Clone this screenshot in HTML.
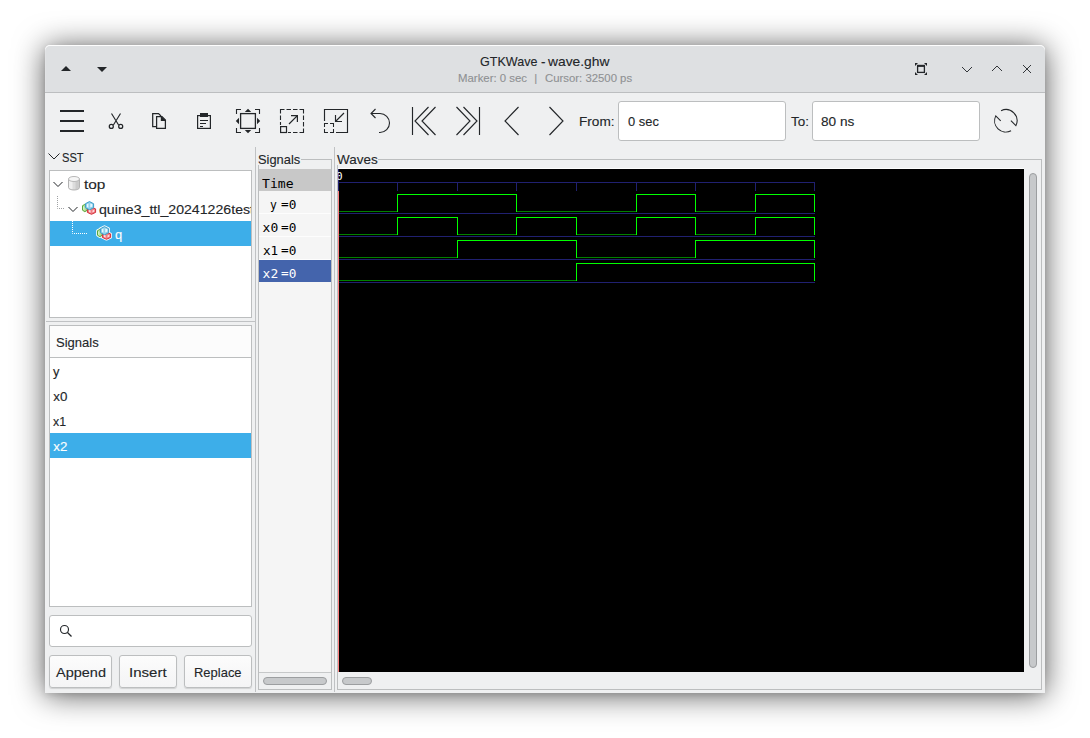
<!DOCTYPE html>
<html lang="en">
<head>
<meta charset="utf-8">
<title>GTKWave - wave.ghw</title>
<style>
*{box-sizing:border-box;margin:0;padding:0}
html,body{width:1090px;height:738px;background:#fff;overflow:hidden}
body{position:relative;font-family:"Liberation Sans",sans-serif;font-size:13.33px;color:#232629;line-height:16px}
body div,body svg{position:absolute}
svg{overflow:visible}
.t{white-space:pre;transform-origin:0 0;-webkit-text-stroke:.12px}
.m{font-family:"DejaVu Sans Mono","Liberation Mono",monospace;font-size:13px;-webkit-text-stroke:0}
.p{position:absolute;top:0;transform-origin:0 0}
.clip{overflow:hidden}
.win{left:45px;top:45px;width:1000px;height:648px;background:#eff0f1;border-radius:5px 5px 0 0;box-shadow:0 2px 6px rgba(0,0,0,.1),0 2px 31px rgba(0,0,0,.66)}
.titlebar{left:45px;top:45px;width:1000px;height:47px;background:#dee0e2;border-radius:5px 5px 0 0;box-shadow:inset 0 1px 0 #fdfdfd,inset 1px 0 0 rgba(255,255,255,.12)}
.entry{background:#fff;border:1px solid #bcbebf;border-radius:3px}
.box{background:#fff;border:1px solid #bcbebf}
.btn{border:1px solid #bcbebf;border-radius:3px;background:linear-gradient(#fcfcfc,#f4f4f5);box-shadow:0 1px 1px rgba(0,0,0,.13)}
.sel{background:#3daee9}
.frame{border:1px solid #bcbebf}
.sb{border:1px solid #9c9ea0;border-radius:4.500px;background:#c7c9cb}
</style>
</head>
<body>
<div class="win"></div>
<div class="titlebar"></div><div style="left:45px;top:92px;width:1000px;height:1px;background:#bcbec0"></div><div class="t" style="left:0;top:54px;width:1090px;height:16px;color:#232629;"><span class="p" style="left:479.50px;transform:scaleX(0.9410)">GTKWave</span> <span class="p" style="left:541.10px;transform:scaleX(1.0000)">-</span> <span class="p" style="left:548.30px;transform:scaleX(1.0367)">wave.ghw</span></div><div class="t" style="left:0;top:70px;width:1090px;height:16px;color:#8f9193;font-size:11.5px;"><span class="p" style="left:457.71px;transform:scaleX(0.9913)">Marker: 0 sec</span>  <span class="p" style="left:534.20px;transform:scaleX(1.0000)">|</span>  <span class="p" style="left:545.40px;transform:scaleX(0.9875)">Cursor: 32500 ps</span></div><svg style="left:0;top:0" width="1090" height="100" viewBox="0 0 1090 100">
  <path d="M61 71 L66 66 L71 71 Z" fill="#232629"/>
  <path d="M97 67 L107 67 L102 72 Z" fill="#232629"/>
  <g fill="none" stroke="#232629" stroke-width="1.3">
    <rect x="917.6" y="66.2" width="6.8" height="6.2"/>
    <path d="M917 65.6 H925" stroke-width="1.6"/>
  </g>
  <path d="M915 63 h3 l-3 3z M927 63 v3 l-3 -3z M915 75 v-3 l3 3z M927 75 h-3 l3 -3z" fill="#232629"/>
  <g fill="none" stroke="#33363a" stroke-width="1">
    <path d="M962 67 L967 72 L972 67"/>
    <path d="M992 71 L997 66 L1002 71"/>
    <path d="M1023 65 L1031 73 M1031 65 L1023 73"/>
  </g>
</svg>
<svg style="left:0;top:0" width="1090" height="150" viewBox="0 0 1090 150">
  <g fill="#232629">
    <rect x="60" y="110" width="24" height="2"/>
    <rect x="60" y="120" width="24" height="2"/>
    <rect x="60" y="130" width="24" height="2"/>
  </g>
  <g fill="none" stroke="#232629" stroke-width="1.25">
    <path d="M111.500 113.500 L118.600 125 M120.500 113.500 L113.400 125" stroke-width="1.150"/>
    <circle cx="111.300" cy="126.400" r="2"/>
    <circle cx="120.700" cy="126.400" r="2"/>
  </g>
  <g fill="none" stroke="#232629" stroke-width="1.25">
    <path d="M156.500 126.500 H152.700 V113.600 H158.500 L161 116"/>
    <path d="M156.600 116.600 H162 L165.400 120 V128.400 H156.600 Z"/>
    <path d="M160.800 115.600 L166.200 121 H160.800 Z" fill="#232629" stroke="none"/>
  </g>
  <g fill="none" stroke="#232629" stroke-width="1.2">
    <rect x="197.600" y="115.600" width="12.800" height="12.800"/>
    <rect x="200" y="113" width="8" height="4" fill="#232629" stroke="none"/>
    <path d="M200 120.500 H208 M200 123.500 H206 M200 126.500 H203" stroke-width="1"/>
  </g>
  <g fill="none" stroke="#232629" stroke-width="1.1">
    <rect x="240.600" y="113.600" width="14.800" height="14.800" stroke-width="1.3"/>
    <path d="M236.500 114 V109.500 H241 M255 109.500 H259.500 V114 M259.500 128 V132.500 H255 M241 132.500 H236.500 V128"/>
    <path d="M244.800 112 L248 108.800 L251.200 112 Z M244.800 130 L248 133.200 L251.200 130 Z M239 117.800 L235.800 121 L239 124.200 Z M257 117.800 L260.200 121 L257 124.200 Z" fill="#232629" stroke="none"/>
  </g>
  <g fill="none" stroke="#232629" stroke-width="1.1">
    <path d="M280 109.500 H304 M303.500 109 V133" stroke-dasharray="4.500 2"/>
    <path d="M280.500 109 V125" stroke-dasharray="4.500 2"/>
    <path d="M304 132.500 H288" stroke-dasharray="4.500 2"/>
    <rect x="280.600" y="126.600" width="5.900" height="5.900" stroke-width="1.200"/>
    <path d="M289 124 L297.400 115.600 M291 115.600 H297.400 V122" stroke-width="1.200"/>
  </g>
  <g fill="none" stroke="#232629" stroke-width="1.15">
    <path d="M324.500 121 V109.500 H347.500 V132.500 H336"/>
    <path d="M324.500 127 V123.500 H328 M330 123.500 H333.500 V127 M333.500 129 V132.500 H330 M328 132.500 H324.500 V129" stroke-width="1.050"/>
    <path d="M344 113 L335.500 121.500 M335.500 115 V121.500 H342"/>
  </g>
  <path d="M375.500 109 L371 113.500 L375.500 118 M371 113.500 H380 A9.500 9.500 0 0 1 380 132.500 H379" fill="none" stroke="#232629" stroke-width="1.1"/>
  <g fill="none" stroke="#232629" stroke-width="1.15">
    <path d="M412.500 107 V135 M428.500 107 L415 121 L428.500 135 M435.500 107 L422 121 L435.500 135"/>
    <path d="M479.500 107 V135 M463.500 107 L477 121 L463.500 135 M456.500 107 L470 121 L456.500 135"/>
    <path d="M518.500 107 L505 121 L518.500 135"/>
    <path d="M549.500 107 L563 121 L549.500 135"/>
  </g>
  <g fill="none" stroke="#232629" stroke-width="1.05">
    <path d="M1001.070 110.650 A11.200 11.200 0 0 1 1015.870 125.710 L1010.900 120.700"/>
    <path d="M1011.060 130.690 A11.200 11.200 0 0 1 995.730 115.890 L1000.700 120.900"/>
  </g>
</svg><div class="t" style="left:578.98px;top:114px;color:#232629;transform:scaleX(1.0212);">From:</div><div class="entry" style="left:618px;top:101px;width:168px;height:40px;"></div><div class="t" style="left:627.50px;top:114px;color:#232629;transform:scaleX(0.9688);">0 sec</div><div class="t" style="left:791.20px;top:114px;color:#232629;transform:scaleX(1.0059);">To:</div><div class="entry" style="left:812px;top:101px;width:168px;height:40px;"></div><div class="t" style="left:821.30px;top:114px;color:#232629;transform:scaleX(1.0212);">80 ns</div>
<div style="left:255px;top:147px;width:1px;height:545px;background:#c0c2c4"></div><div class="box" style="left:49px;top:170px;width:203px;height:148px;"></div><div class="sel" style="left:50px;top:221px;width:201px;height:25px;"></div><div style="left:46px;top:321px;width:209px;height:1px;background:#c0c2c4"></div><div class="box" style="left:49px;top:325px;width:203px;height:282px;"></div><div style="left:50px;top:326px;width:201px;height:31px;background:#fcfcfc"></div><div style="left:50px;top:357px;width:201px;height:1px;background:#bcbebf"></div><div class="sel" style="left:50px;top:433px;width:201px;height:25px;"></div><div class="entry" style="left:49px;top:615px;width:203px;height:32px;"></div><div class="btn" style="left:49px;top:655px;width:63px;height:33px;"></div><div class="btn" style="left:119px;top:655px;width:58px;height:33px;"></div><div class="btn" style="left:184px;top:655px;width:68px;height:33px;"></div><svg style="left:0;top:0" width="300" height="738" viewBox="0 0 300 738">
  <g fill="none" stroke="#232629" stroke-width="1">
    <path d="M48.500 153.500 L54 159 L59.500 153.500"/>
    <path d="M53.500 182 L58 186.500 L62.500 182"/>
    <path d="M68.500 207 L73 211.500 L77.500 207"/>
  </g>
  <path d="M57.500 196 V208.500 H64" fill="none" stroke="#a0a2a4" stroke-width="1" stroke-dasharray="1 1"/>
  <path d="M72.500 221 V233.500 H87" fill="none" stroke="#fff" stroke-width="1" stroke-dasharray="1 1"/>
  <path d="M68.500 179 V187.500 A5.500 2.500 0 0 0 79.500 187.500 V179 Z" fill="#dcdcdc"/>
  <path d="M69 179 V188 Q70.500 189.300 72.500 189.700 V180 Z" fill="#f0f0f0"/>
  <path d="M79 179 V188 Q77.500 189.300 75.500 189.700 V180 Z" fill="#cbcbcb"/>
  <path d="M68.500 179 V187.500 A5.500 2.500 0 0 0 79.500 187.500 V179" fill="none" stroke="#b2b2b2" stroke-width="1"/>
  <ellipse cx="74" cy="179" rx="5.500" ry="2.500" fill="#f6f6f6" stroke="#b8b8b8" stroke-width="1"/>
  <g transform="translate(82 201)"><path d="M2.800 3.400 L5.300 4.700 V9.200 L2.800 10.700 L.5 9.200 V4.700 Z" fill="#aee094" stroke="#58a73a" stroke-width="1" stroke-linejoin="round"/>
<path d="M9.500 6.200 L13.600 7.900 V11.400 L9.500 13.300 L5.400 11.400 V7.900 Z" fill="#f17c82" stroke="#d2313b" stroke-width="1" stroke-linejoin="round"/>
<path d="M7.500 .6 L11.600 2.700 V6.700 L7.500 8.900 L3.400 6.700 V2.700 Z" fill="#8ed1ed" stroke="#3d9cc7" stroke-width="1" stroke-linejoin="round"/>
<path d="M5 3.200 L6.400 2.600 V6.800 L5 6 Z M8.300 2.400 L10.300 3.300 V5.600 L8.300 6.600 Z" fill="#e9f7fd"/>
<path d="M1.300 5.200 L2.300 6 V9 L1.300 8.400 Z" fill="#e6f6dd"/>
<path d="M7 9 L8.600 9.600 V11.800 L7 11.100 Z M10.500 9.600 L12.300 8.800 V10.600 L10.500 11.600 Z" fill="#fde0e2"/></g>
  <g transform="translate(97 226)"><path d="M7.500 .6 L11.600 2.700 V6.700 L7.500 8.900 L3.400 6.700 V2.700 Z M2.800 3.400 L5.300 4.700 V9.200 L2.800 10.700 L.5 9.200 V4.700 Z M9.500 6.200 L13.600 7.900 V11.400 L9.500 13.300 L5.400 11.400 V7.900 Z" fill="#fff" stroke="#fff" stroke-width="2.600" stroke-linejoin="round"/><path d="M2.800 3.400 L5.300 4.700 V9.200 L2.800 10.700 L.5 9.200 V4.700 Z" fill="#aee094" stroke="#58a73a" stroke-width="1" stroke-linejoin="round"/>
<path d="M9.500 6.200 L13.600 7.900 V11.400 L9.500 13.300 L5.400 11.400 V7.900 Z" fill="#f17c82" stroke="#d2313b" stroke-width="1" stroke-linejoin="round"/>
<path d="M7.500 .6 L11.600 2.700 V6.700 L7.500 8.900 L3.400 6.700 V2.700 Z" fill="#8ed1ed" stroke="#3d9cc7" stroke-width="1" stroke-linejoin="round"/>
<path d="M5 3.200 L6.400 2.600 V6.800 L5 6 Z M8.300 2.400 L10.300 3.300 V5.600 L8.300 6.600 Z" fill="#e9f7fd"/>
<path d="M1.300 5.200 L2.300 6 V9 L1.300 8.400 Z" fill="#e6f6dd"/>
<path d="M7 9 L8.600 9.600 V11.800 L7 11.100 Z M10.500 9.600 L12.300 8.800 V10.600 L10.500 11.600 Z" fill="#fde0e2"/></g>
  <circle cx="64.500" cy="629.500" r="4" fill="none" stroke="#232629" stroke-width="1.150"/>
  <path d="M67.500 632.500 L71.500 636.500" fill="none" stroke="#232629" stroke-width="1.150"/>
</svg><div class="t" style="left:61.56px;top:150px;color:#232629;transform:scaleX(0.8360);">SST</div><div class="t" style="left:84.30px;top:177px;color:#232629;transform:scaleX(1.1556);">top</div><div class="clip" style="left:90px;top:202px;width:161px;height:16px"><div class="t" style="left:8.80px;top:0;color:#232629;transform:scaleX(1.0620);">quine3_ttl_20241226test</div></div><div class="t" style="left:114.60px;top:227px;color:#fff;transform:scaleX(0.9714);">q</div><div class="t" style="left:55.62px;top:335px;color:#232629;transform:scaleX(0.9767);">Signals</div><div class="t" style="left:53.10px;top:364px;color:#232629;transform:scaleX(0.9714);">y</div><div class="t" style="left:53.30px;top:389px;color:#232629;">x0</div><div class="t" style="left:53.30px;top:414px;color:#232629;transform:scaleX(0.9286);">x1</div><div class="t" style="left:53.30px;top:439px;color:#fff;">x2</div><div class="t" style="left:56.10px;top:665px;color:#232629;transform:scaleX(1.0867);">Append</div><div class="t" style="left:129.07px;top:665px;color:#232629;transform:scaleX(1.1273);">Insert</div><div class="t" style="left:193.53px;top:665px;color:#232629;transform:scaleX(0.9729);">Replace</div>
<div class="frame" style="left:258px;top:159px;width:74px;height:531px;"></div><div style="left:258px;top:150px;width:43px;height:15px;background:#eff0f1"></div><div class="t" style="left:257.53px;top:152px;color:#232629;transform:scaleX(0.9651);">Signals</div><div style="left:259px;top:169px;width:72px;height:503px;background:#f5f5f5"></div><div style="left:259px;top:169px;width:72px;height:22px;background:#c8c8c8"></div><div style="left:259px;top:213px;width:72px;height:1px;background:#fdfdfd"></div><div style="left:259px;top:236px;width:72px;height:1px;background:#fdfdfd"></div><div style="left:259px;top:259px;width:72px;height:1px;background:#fdfdfd"></div><div style="left:259px;top:260px;width:72px;height:22px;background:#4464ac"></div><div class="t m" style="left:262.40px;top:176px;color:#000;transform:scaleX(1.0065);">Time</div><div class="t m" style="left:270.20px;top:197px;color:#000;transform:scaleX(0.8750);">y</div><div class="t m" style="left:281.00px;top:197px;color:#000;transform:scaleX(0.9800);"><span style="position:relative;top:-1px">=</span>0</div><div class="t m" style="left:262.60px;top:220px;color:#000;">x0</div><div class="t m" style="left:281.00px;top:220px;color:#000;transform:scaleX(0.9800);"><span style="position:relative;top:-1px">=</span>0</div><div class="t m" style="left:262.60px;top:243px;color:#000;transform:scaleX(0.9733);">x1</div><div class="t m" style="left:281.00px;top:243px;color:#000;transform:scaleX(0.9800);"><span style="position:relative;top:-1px">=</span>0</div><div class="t m" style="left:262.60px;top:266px;color:#fff;">x2</div><div class="t m" style="left:281.00px;top:266px;color:#fff;transform:scaleX(0.9800);"><span style="position:relative;top:-1px">=</span>0</div><div style="left:259px;top:672px;width:72px;height:1px;background:#c6c8c9"></div><div class="sb" style="left:263px;top:677px;width:64px;height:8px;"></div>
<div style="left:334px;top:147px;width:1px;height:545px;background:#c0c2c4"></div><div class="frame" style="left:337px;top:159px;width:705px;height:531px;"></div><div style="left:337px;top:150px;width:41px;height:15px;background:#eff0f1"></div><div class="t" style="left:336.90px;top:152px;color:#232629;transform:scaleX(1.0100);">Waves</div><div style="left:338px;top:168px;width:686px;height:1px;background:#fdfdfd"></div><div style="left:338px;top:169px;width:686px;height:503px;background:#000;overflow:hidden"><svg style="left:0;top:0" width="686" height="503" viewBox="338 169 686 503" shape-rendering="crispEdges">
<path d="M338 182.500 H815 M338.500 169 V182 M338.5 182 V191 M397.5 182 V191 M457.5 182 V191 M516.5 182 V191 M576.5 182 V191 M636.5 182 V191 M695.5 182 V191 M755.5 182 V191 M814.5 182 V191 M338 213.500 H815 M338 236.500 H815 M338 259.500 H815 M338 282.500 H815" fill="none" stroke="#202070"/>
<path d="M338.500 191 V672" fill="none" stroke="#ff8080"/>
<path d="M339 211.5 H397 M517 211.5 H636 M696 211.5 H755 M339 234.5 H397 M458 234.5 H516 M577 234.5 H636 M696 234.5 H755 M339 257.5 H457 M577 257.5 H695 M339 280.5 H576" fill="none" stroke="#008000"/>
<path d="M397.5 212 V194.5 H516.5 V212 M636.5 212 V194.5 H695.5 V212 M755.5 212 V194.5 H814.5 V212 M397.5 235 V217.5 H457.5 V235 M516.5 235 V217.5 H576.5 V235 M636.5 235 V217.5 H695.5 V235 M755.5 235 V217.5 H814.5 V235 M457.5 258 V240.5 H576.5 V258 M695.5 258 V240.5 H814.5 V258 M576.5 281 V263.5 H814.5 V281" fill="none" stroke="#00ff00"/>
</svg>
<div class="t m" style="left:-2px;top:1px;font-size:11px;line-height:14px;color:#fff">0</div></div><div class="sb" style="left:1029px;top:173px;width:8px;height:495px;"></div><div class="sb" style="left:342px;top:677px;width:30px;height:8px;"></div>
</body>
</html>
